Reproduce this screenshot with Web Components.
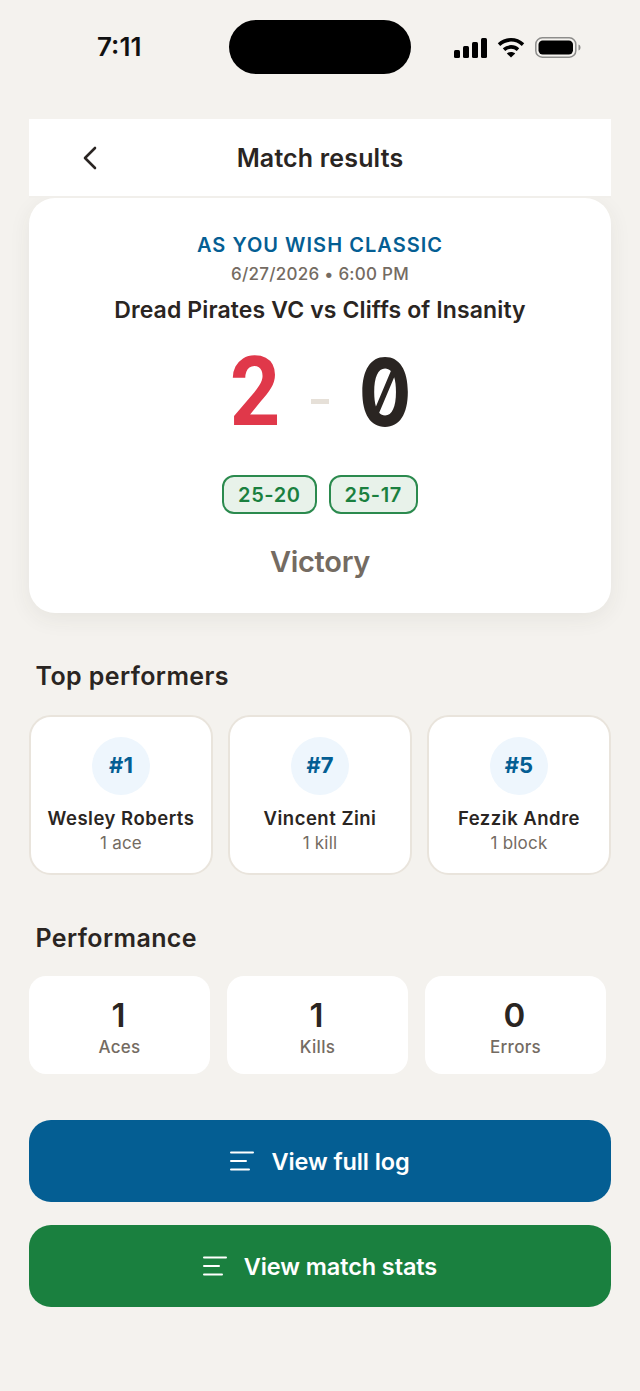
<!DOCTYPE html>
<html lang="en">
<head>
<meta charset="utf-8">
<title>Match results</title>
<style>
  html, body { margin: 0; padding: 0; }
  body { background: #f4f2ee; font-family: Inter, "Liberation Sans", sans-serif; color: #2a2522; width: 640px; height: 1391px; overflow: hidden; }
  main { display: flex; flex-direction: column; padding: 0 29px; }
</style>
</head>
<body>
<status-bar></status-bar>
<main>
  <app-header>Match results</app-header>
  <score-card></score-card>
  <section-title style="--top:47px">Top performers</section-title>
  <performer-row>
    <performer-card number="#1" name="Wesley Roberts" stat="1 ace"></performer-card>
    <performer-card number="#7" name="Vincent Zini" stat="1 kill"></performer-card>
    <performer-card number="#5" name="Fezzik Andre" stat="1 block"></performer-card>
  </performer-row>
  <section-title style="--top:47px">Performance</section-title>
  <stat-row>
    <stat-tile value="1" label="Aces"></stat-tile>
    <stat-tile value="1" label="Kills"></stat-tile>
    <stat-tile value="0" label="Errors"></stat-tile>
  </stat-row>
  <action-button style="--bg:#045e93;--top:46px">View full log</action-button>
  <action-button style="--bg:#1a803f;--top:23px">View match stats</action-button>
</main>
<script>
"use strict";

const define = (name, html) => {
    customElements.define(name, class extends HTMLElement {
        constructor() {
            super();
            this.attachShadow({ mode: 'open' });
        }

        connectedCallback() {
            // Attributes get substituted into the markup as {name}
            this.shadowRoot.innerHTML = html.replace(/\{(\w+)\}/g, (m, key) => this.getAttribute(key) || '');
        }
    });
};

define('status-bar', `
    <style>
        :host { display: flex; align-items: center; height: 119px; box-sizing: border-box; padding: 20px 59px 45px 97px; }
        .time { width: 132px; font-size: 26px; font-weight: 600; color: #111; line-height: 54px; }
        .island { width: 182px; height: 54px; border-radius: 27px; background: #000; }
        .icons { display: flex; align-items: center; gap: 10px; margin-left: 43px; }
        svg { display: block; }
    </style>
    <span class="time">7:11</span>
    <div class="island"></div>
    <div class="icons">
        <svg width="33" height="21" viewBox="0 0 33 21"><rect x="0" y="13" width="6" height="8" rx="1.5"/><rect x="9" y="9" width="6" height="12" rx="1.5"/><rect x="18" y="5" width="6" height="16" rx="1.5"/><rect x="27" y="1" width="6" height="20" rx="1.5"/></svg>
        <svg width="28" height="21" viewBox="0 0 28 21" fill="none" stroke="#000" stroke-width="3.6"><path d="M2 7.6C9 1.2 19 1.2 26 7.6"/><path d="M7 12.6c4-3.6 10-3.6 14 0"/><path d="M14 20.6l-4.2-4.2c2.3-2 6.100-2 8.400 0z" fill="#000" stroke="none"/></svg>
        <svg width="46" height="21" viewBox="0 0 46 21"><rect x=".8" y=".8" width="40" height="19.400" rx="6.500" fill="none" stroke="#8d8d8b" stroke-width="1.500"/><rect x="3.500" y="3.500" width="34.500" height="14" rx="4.200"/><path d="M43.500 7.500c1.300.4 2 1.500 2 3s-.7 2.600-2 3z" fill="#8d8d8b"/></svg>
    </div>
`);

define('app-header', `
    <style>
        :host { display: block; position: relative; height: 77px; background: #fff; border-bottom: 2px solid #f1efeb; box-sizing: content-box; }
        .bar { display: flex; align-items: center; justify-content: center; height: 77px; font-size: 25px; font-weight: 600; letter-spacing: .16px; color: #2a2522; }
        svg { position: absolute; left: 53px; top: 27px; }
    </style>
    <svg width="16" height="24" viewBox="0 0 16 24" fill="none" stroke="#2a2522" stroke-width="2.600" stroke-linecap="round" stroke-linejoin="round"><path d="M13 2 3 12l10 10"/></svg>
    <div class="bar"><slot></slot></div>
`);

define('score-card', `
    <style>
        :host { display: flex; flex-direction: column; align-items: center; height: 415px; box-sizing: border-box; padding-top: 34px; background: #fff; border-radius: 26px; box-shadow: 0 6px 22px rgba(60, 50, 40, .07); }
        .event { font-size: 20px; line-height: 26px; font-weight: 600; letter-spacing: 1.030px; color: #045e93; }
        .date { font-size: 17px; line-height: 24px; font-weight: 500; letter-spacing: .26px; color: #746b62; margin-top: 4px; }
        .teams { font-size: 23px; line-height: 30px; font-weight: 600; letter-spacing: .12px; color: #2a2522; margin-top: 9px; }
        .score { display: flex; align-items: center; height: 92px; margin-top: 21px; font-size: 93px; font-weight: 700; line-height: 92px; }
        .win { box-sizing: border-box; color: #e0384a; width: 50px; padding-right: 2px; display: flex; justify-content: center; font-family: Roboto, sans-serif; font-size: 96px; transform: scaleX(.92); }
        .sep { width: 18px; height: 5px; background: #e6e0d8; margin: 19px 32px 0 30px; }
        .lose { color: #2a2522; width: 48px; display: flex; justify-content: center; font-feature-settings: "zero"; transform: scaleX(.84); }
        .sets { display: flex; gap: 12px; margin-top: 37px; }
        .set { box-sizing: border-box; height: 39px; padding: 0 14px; display: flex; align-items: center; border: 2px solid #2b8a4e; border-radius: 12px; background: #e8f2ea; color: #1a803f; font-size: 20px; font-weight: 600; letter-spacing: .6px; }
        .result { font-size: 29px; line-height: 36px; font-weight: 600; letter-spacing: -0.3px; color: #746b62; margin-top: 30px; }
    </style>
    <div class="event">AS YOU WISH CLASSIC</div>
    <div class="date">6/27/2026 • 6:00 PM</div>
    <div class="teams">Dread Pirates VC vs Cliffs of Insanity</div>
    <div class="score"><span class="win">2</span><span class="sep"></span><span class="lose">0</span></div>
    <div class="sets"><span class="set">25-20</span><span class="set">25-17</span></div>
    <div class="result">Victory</div>
`);

define('section-title', `
    <style>
        :host { display: block; margin-top: var(--top); padding-left: 6.5px; font-size: 25px; line-height: 32px; font-weight: 600; letter-spacing: .4px; color: #2a2522; }
    </style>
    <slot></slot>
`);

define('performer-row', `
    <style>
        :host { display: flex; gap: 15px; margin-top: 23px; }
    </style>
    <slot></slot>
`);

define('performer-card', `
    <style>
        :host { display: flex; flex-direction: column; align-items: center; box-sizing: border-box; width: 184px; height: 160px; padding-top: 20px; background: #fff; border: 2px solid #e9e4dc; border-radius: 22px; }
        .badge { width: 58px; height: 58px; border-radius: 50%; background: #eef6fd; color: #045e93; display: flex; align-items: center; justify-content: center; font-size: 22px; font-weight: 700; padding-bottom: 2px; box-sizing: border-box; }
        .name { font-size: 18.500px; line-height: 24px; font-weight: 600; letter-spacing: .5px; color: #2a2522; margin-top: 11px; }
        .stat { font-size: 17px; line-height: 24px; letter-spacing: .2px; color: #746b62; margin-top: 1px; }
    </style>
    <div class="badge">{number}</div>
    <div class="name">{name}</div>
    <div class="stat">{stat}</div>
`);

define('stat-row', `
    <style>
        :host { display: flex; gap: 17px; margin-top: 22px; }
    </style>
    <slot></slot>
`);

define('stat-tile', `
    <style>
        :host { display: flex; flex-direction: column; align-items: center; box-sizing: border-box; width: 181px; height: 98px; padding-top: 19px; background: #fff; border-radius: 17px; }
        .value { font-size: 33px; line-height: 40px; font-weight: 600; color: #2a2522; margin-left: -2px; }
        .label { font-size: 17px; line-height: 22px; font-weight: 500; letter-spacing: .3px; color: #746b62; margin-top: 1px; }
    </style>
    <div class="value">{value}</div>
    <div class="label">{label}</div>
`);

define('action-button', `
    <style>
        :host { display: flex; align-items: center; justify-content: center; gap: 17px; height: 82px; margin-top: var(--top); background: var(--bg); border-radius: 22px; color: #fff; font-size: 23.500px; font-weight: 600; letter-spacing: -0.1px; }
        svg { display: block; }
    </style>
    <svg width="24" height="20" viewBox="0 0 24 20" fill="none" stroke="#fff" stroke-width="2" stroke-linecap="round"><path d="M1 1.500h22M1 10h15M1 18.500h18"/></svg>
    <span><slot></slot></span>
`);
</script>
</body>
</html>
